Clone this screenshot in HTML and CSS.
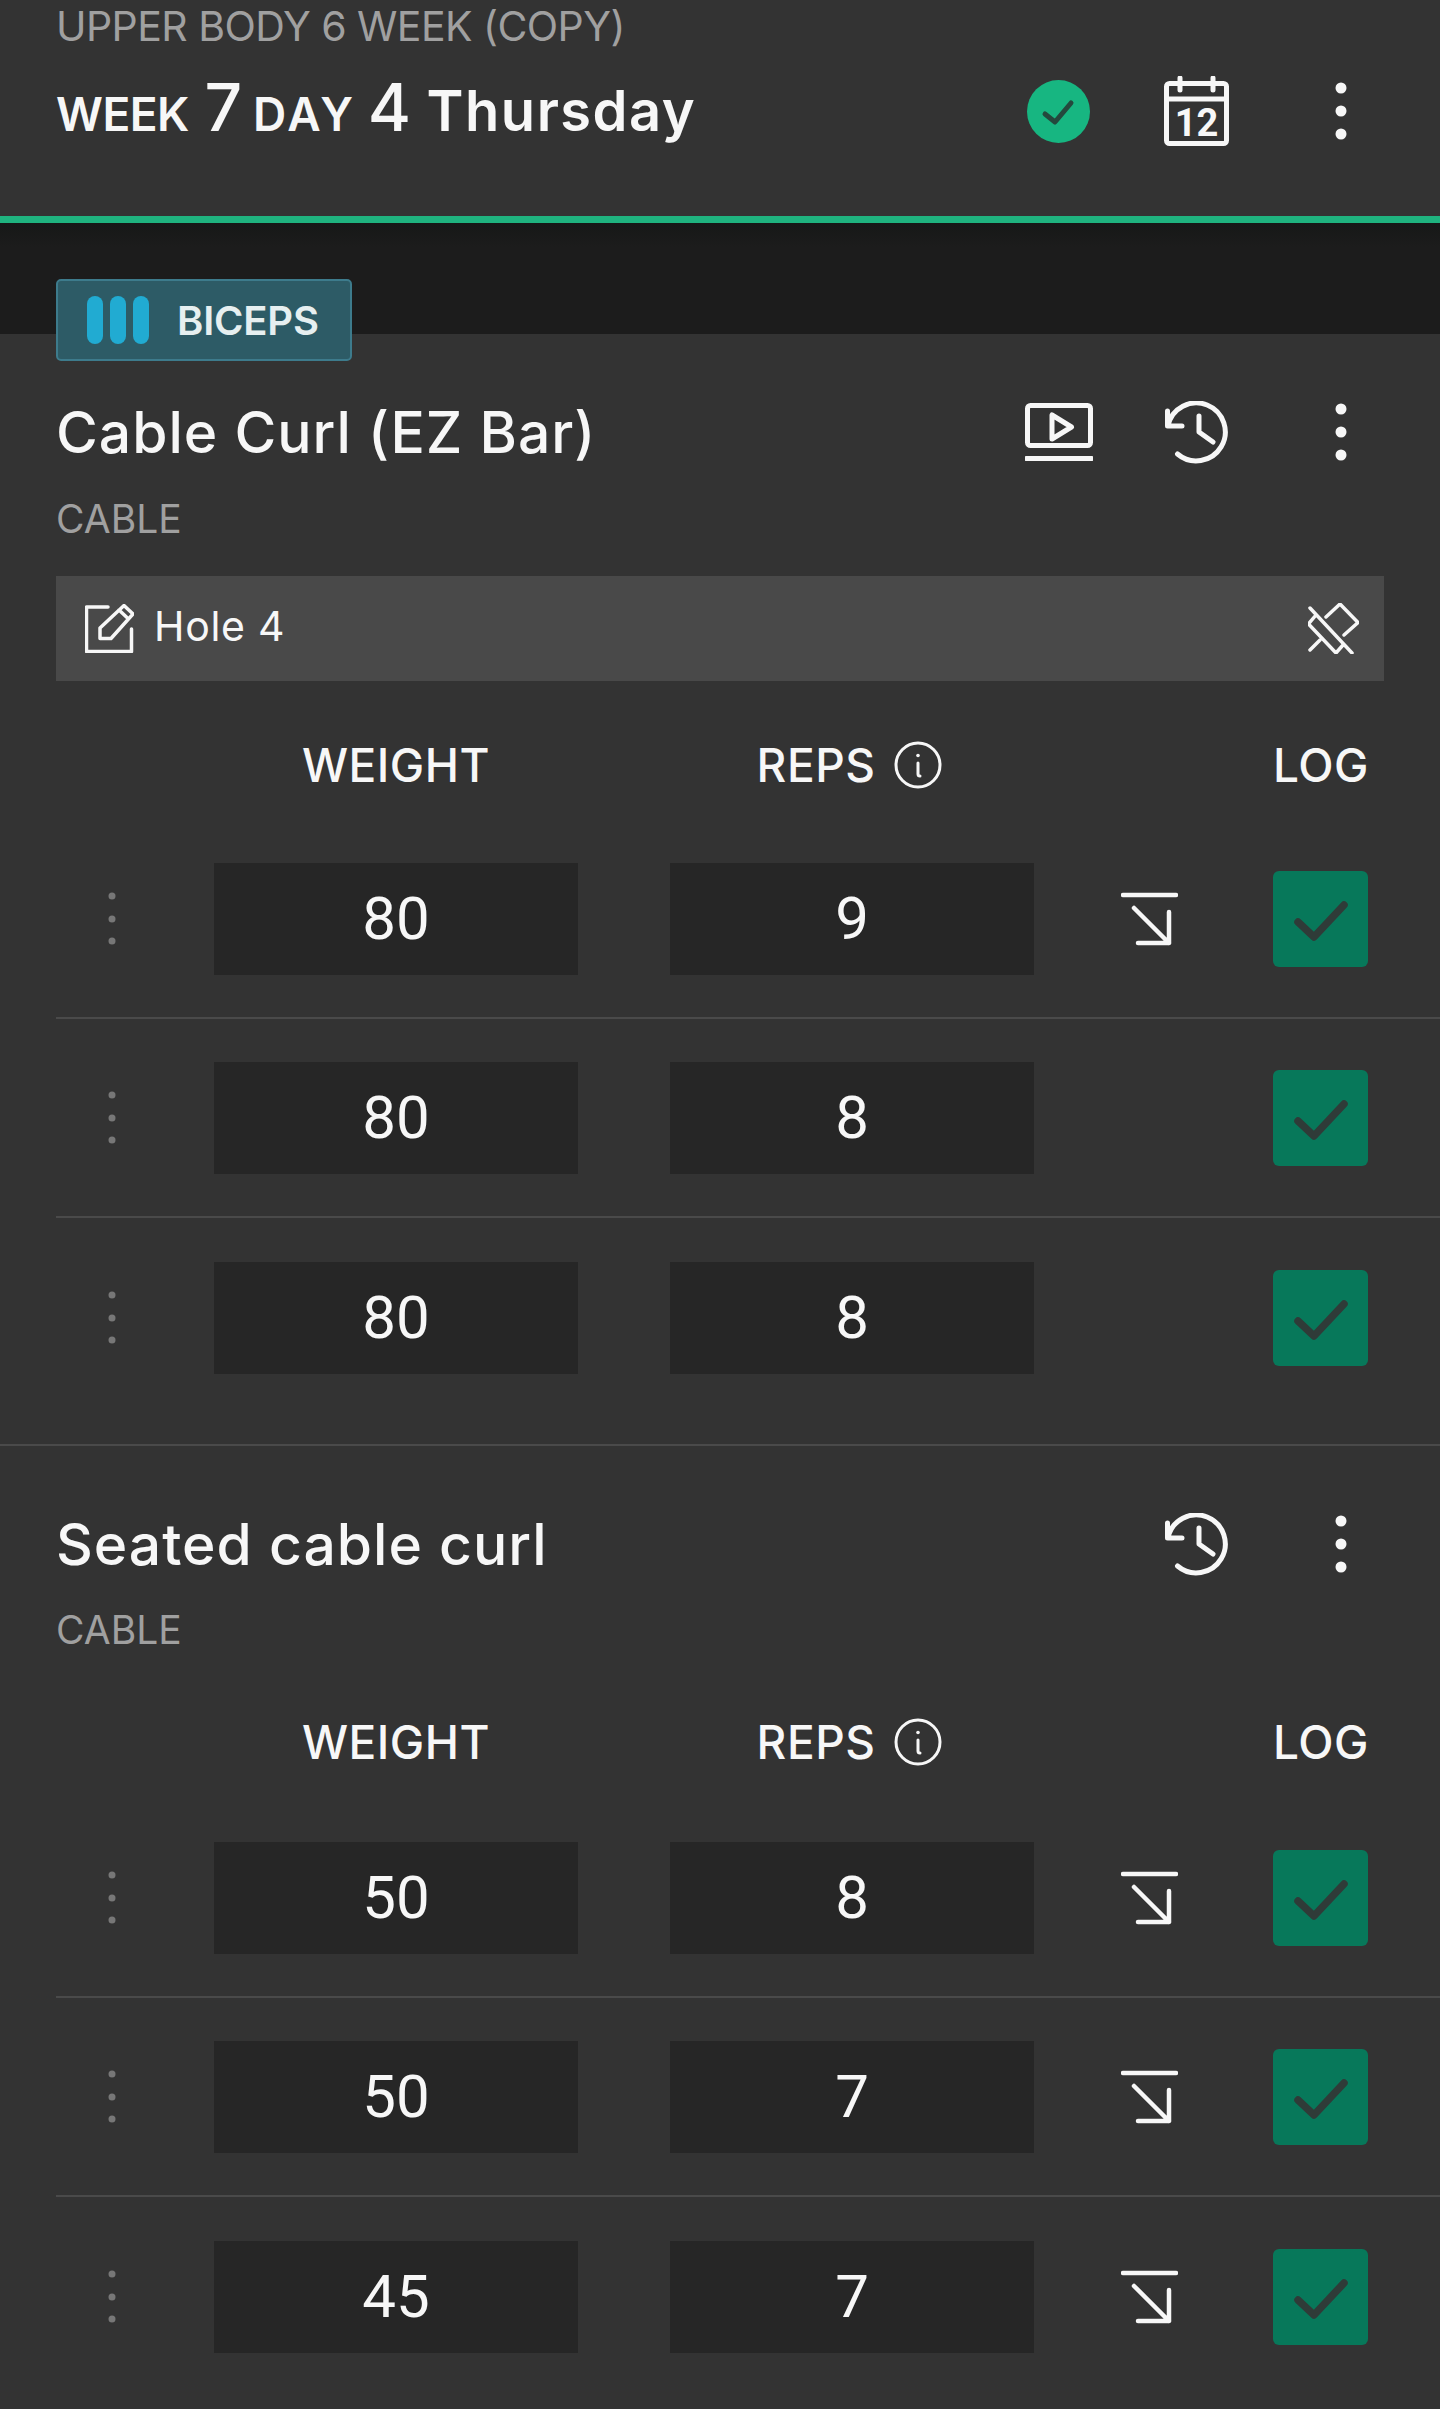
FILE: index.html
```html
<html lang="en">
<head>
  <meta charset="UTF-8" />
  <title>Workout Log</title>
  <link rel="stylesheet" href="styles.css">
</head>
<body>
  <svg class="sprite">
    <symbol id="i-dots" viewBox="0 0 22 68"><circle cx="11" cy="11" r="5.5"/><circle cx="11" cy="34" r="5.5"/><circle cx="11" cy="57" r="5.5"/></symbol>
    <symbol id="i-history" viewBox="0 0 65 63"><path d="M2.500 10V25H17M3 24.500A29 29 0 1 1 12.500 53M34 15V31L48 41"/></symbol>
    <symbol id="i-video" viewBox="0 0 68 58"><rect x="2.500" y="2.500" width="63" height="40" rx="3"/><path d="M1.500 55.500H66.500M27 12V36L46.500 24Z"/></symbol>
    <symbol id="i-info" viewBox="0 0 48 48"><circle cx="24" cy="24" r="22"/><path d="M24 22V33Q24 35 26 35"/><circle class="fill" cx="24" cy="14.500" r="1.800"/></symbol>
    <symbol id="i-grip" viewBox="0 0 8 54"><circle cx="4" cy="4" r="3.500"/><circle cx="4" cy="27" r="3.500"/><circle cx="4" cy="49" r="3.500"/></symbol>
    <symbol id="i-copy" viewBox="0 0 57 54"><path d="M2 3H55M13 16L48 51M48 20V51H17"/></symbol>
    <symbol id="i-check" viewBox="0 0 95 96"><path d="M25 51L41 66L71 34"/></symbol>
  </svg>

  <header class="top">
    <div class="plan">UPPER BODY 6 WEEK (COPY)</div>
    <div class="top-row">
      <h1 class="day">
        <span class="small">WEEK</span> <span class="big">7</span> <span class="small wide">DAY</span> <span class="big next">4</span> Thursday
      </h1>
      <div class="top-icons">
        <svg class="done" viewBox="0 0 63 63"><circle cx="31.500" cy="31.500" r="31.500"/><path d="M18 34L28 42L44 23"/></svg>
        <svg class="calendar" viewBox="0 0 65 70">
          <rect x="2.500" y="7.500" width="60" height="60" rx="3"/>
          <path d="M2.500 23H62.500M16 2V14M49 2V14"/>
          <text x="32.500" y="60" text-anchor="middle">12</text>
        </svg>
        <svg class="dots"><use href="#i-dots"/></svg>
      </div>
    </div>
  </header>

  <div class="band"></div>

  <main class="log">
    <div class="badge">
      <span class="bars"><i></i><i></i><i></i></span>
      <span>BICEPS</span>
    </div>

    <section class="exercise first">
      <div class="ex-head">
        <h2>Cable Curl (EZ Bar)</h2>
        <svg class="ic-video"><use href="#i-video"/></svg>
        <svg class="ic-history"><use href="#i-history"/></svg>
        <svg class="dots"><use href="#i-dots"/></svg>
      </div>
      <div class="kind">CABLE</div>
      <div class="note">
        <svg class="ic-pencil" viewBox="0 0 49 49"><path d="M23 3H1.500V47.500H46.500V25M39 1.500L48 10L26 34.500H15V24ZM34 6L43 14.500"/></svg>
        <span class="note-text">Hole 4</span>
        <svg class="ic-pin" viewBox="0 0 51 51"><path d="M2 5L44 50M18 14L32 1L50 19.500L36 32M8 12L0.500 21L28 50L35 42M12 37L2 47"/></svg>
      </div>
      <div class="cols">
        <span class="col-w">WEIGHT</span>
        <span class="col-r">REPS <svg class="ic-info"><use href="#i-info"/></svg></span>
        <span class="col-l">LOG</span>
      </div>
      <div class="set">
        <svg class="grip"><use href="#i-grip"/></svg>
        <div class="val">80</div>
        <div class="val">9</div>
        <svg class="ic-copy"><use href="#i-copy"/></svg>
        <svg class="tick"><use href="#i-check"/></svg>
      </div>
      <div class="set">
        <svg class="grip"><use href="#i-grip"/></svg>
        <div class="val">80</div>
        <div class="val">8</div>
        <span></span>
        <svg class="tick"><use href="#i-check"/></svg>
      </div>
      <div class="set">
        <svg class="grip"><use href="#i-grip"/></svg>
        <div class="val">80</div>
        <div class="val">8</div>
        <span></span>
        <svg class="tick"><use href="#i-check"/></svg>
      </div>
    </section>

    <section class="exercise second">
      <div class="ex-head">
        <h2>Seated cable curl</h2>
        <svg class="ic-history"><use href="#i-history"/></svg>
        <svg class="dots"><use href="#i-dots"/></svg>
      </div>
      <div class="kind">CABLE</div>
      <div class="cols">
        <span class="col-w">WEIGHT</span>
        <span class="col-r">REPS <svg class="ic-info"><use href="#i-info"/></svg></span>
        <span class="col-l">LOG</span>
      </div>
      <div class="set">
        <svg class="grip"><use href="#i-grip"/></svg>
        <div class="val">50</div>
        <div class="val">8</div>
        <svg class="ic-copy"><use href="#i-copy"/></svg>
        <svg class="tick"><use href="#i-check"/></svg>
      </div>
      <div class="set">
        <svg class="grip"><use href="#i-grip"/></svg>
        <div class="val">50</div>
        <div class="val">7</div>
        <svg class="ic-copy"><use href="#i-copy"/></svg>
        <svg class="tick"><use href="#i-check"/></svg>
      </div>
      <div class="set">
        <svg class="grip"><use href="#i-grip"/></svg>
        <div class="val">45</div>
        <div class="val">7</div>
        <svg class="ic-copy"><use href="#i-copy"/></svg>
        <svg class="tick"><use href="#i-check"/></svg>
      </div>
    </section>
  </main>
</body>
</html>
```

FILE: styles.css
```css
* {
  margin: 0;
  padding: 0;
  box-sizing: border-box;
}

html, body {
  height: 2409px;
  overflow: hidden;
}

body {
  background: #333;
  color: #f7f7f7;
  font-family: Inter, "Liberation Sans", sans-serif;
}

svg {
  display: block;
  flex: none;
  fill: none;
  stroke: #f7f7f7;
  stroke-linecap: round;
  stroke-linejoin: round;
}

.sprite {
  display: none;
}

.top {
  height: 223px;
  padding: 0 56px;
  background: #333;
  border-bottom: 7px solid #1fb37f;
}

.plan {
  height: 52px;
  font-size: 41px;
  line-height: 52px;
  color: #a0a0a0;
  letter-spacing: -0.55px;
  white-space: nowrap;
}

.top-row {
  display: flex;
  align-items: center;
  justify-content: space-between;
  height: 60px;
  margin-top: 29px;
}

.day {
  margin-bottom: 8px;
  font-size: 56px;
  font-weight: 600;
  letter-spacing: 1.5px;
  white-space: nowrap;
}

.day .small {
  font-size: 46px;
  letter-spacing: -0.5px;
}

.day .wide {
  margin-left: -5px;
  letter-spacing: 3px;
}

.day .big {
  font-size: 66px;
  font-weight: 500;
  letter-spacing: 0;
}

.day .next {
  margin-left: -4px;
}

.top-icons {
  display: flex;
  align-items: center;
  margin-right: 29px;
}

.done {
  width: 63px;
  height: 63px;
  margin-right: 74px;
}

.done circle {
  fill: #17b681;
  stroke: none;
}

.done path {
  stroke: #24493d;
  stroke-width: 5;
}

.calendar {
  width: 65px;
  height: 70px;
  margin-right: 101px;
  stroke-width: 5;
}

.calendar text {
  fill: #f7f7f7;
  stroke: none;
  font-size: 38px;
  font-weight: 700;
  font-family: Roboto, sans-serif;
}

.dots {
  width: 22px;
  height: 68px;
  margin-right: 3px;
  fill: #f7f7f7;
  stroke: none;
}

.band {
  height: 111px;
  background: linear-gradient(#161817, #1c1c1c 24px);
}

.log {
  position: relative;
}

.badge {
  position: absolute;
  left: 56px;
  top: -55px;
  display: flex;
  align-items: center;
  gap: 28px;
  width: 296px;
  height: 82px;
  padding-left: 29px;
  background: #2d5b66;
  border: 2px solid #3d7b8c;
  border-radius: 5px;
  font-size: 40px;
  font-weight: 600;
  color: #e6eff0;
  letter-spacing: -0.2px;
}

.bars {
  display: flex;
  gap: 7px;
}

.bars i {
  display: block;
  width: 16px;
  height: 48px;
  background: #21abd2;
  border-radius: 8px;
}

.first {
  height: 1112px;
  padding-top: 64px;
  border-bottom: 2px solid #4a4a4a;
}

.second {
  padding-top: 64px;
}

.ex-head {
  display: flex;
  align-items: center;
  height: 68px;
  padding: 0 0 0 56px;
}

.ex-head h2 {
  flex: 1;
  font-size: 57px;
  font-weight: 500;
  letter-spacing: 1px;
}

.ic-video {
  width: 68px;
  height: 58px;
  margin-right: 72px;
  stroke-width: 5;
}

.ic-history {
  width: 65px;
  height: 63px;
  margin-right: 100px;
  stroke-width: 5;
}

.ex-head .dots {
  margin-right: 88px;
}

.kind {
  margin: 30px 0 0 56px;
  font-size: 39px;
  line-height: 46px;
  color: #a0a0a0;
}

.second .kind {
  margin-top: 29px;
}

.note {
  display: flex;
  align-items: center;
  width: 1328px;
  height: 105px;
  margin: 34px 0 0 56px;
  padding: 0 25px 0 29px;
  background: #494949;
}

.ic-pencil {
  width: 49px;
  height: 49px;
  stroke-width: 3.500;
}

.note-text {
  flex: 1;
  margin-left: 20px;
  padding-bottom: 5px;
  font-size: 41px;
  letter-spacing: 0.7px;
}

.ic-pin {
  width: 51px;
  height: 51px;
  stroke-width: 3.500;
}

.cols {
  display: grid;
  grid-template-columns: 214px 364px 92px 364px 239px 95px;
  align-items: center;
  height: 52px;
  margin: 56px 0 31px;
  font-size: 46px;
  font-weight: 500;
  letter-spacing: 0.5px;
}

.second .cols {
  margin: 61px 0 33px;
}

.col-w {
  grid-column: 2;
  text-align: center;
}

.col-r {
  grid-column: 4;
  display: flex;
  align-items: center;
  justify-content: center;
  gap: 19px;
  padding-right: 5px;
}

.col-l {
  grid-column: 6;
  text-align: center;
}

.ic-info {
  width: 48px;
  height: 48px;
  stroke-width: 3;
}

.fill {
  fill: #f7f7f7;
  stroke: none;
}

.set {
  display: grid;
  grid-template-columns: 158px 364px 456px 239px 95px;
  align-items: center;
  height: 199px;
  margin-left: 56px;
  border-bottom: 2px solid #4a4a4a;
}

.set:last-child {
  border-bottom: 0;
}

.grip {
  width: 8px;
  height: 54px;
  margin-left: 52px;
  fill: #777;
  stroke: none;
}

.val {
  display: flex;
  align-items: center;
  justify-content: center;
  height: 112px;
  background: #262626;
  font-family: Roboto, sans-serif;
  font-size: 60px;
}

.val + .val {
  margin-left: 92px;
}

.ic-copy {
  width: 57px;
  height: 54px;
  margin-left: 87px;
  stroke-width: 4.500;
}

.tick {
  width: 95px;
  height: 96px;
  background: #07785a;
  border-radius: 6px;
  stroke: #2f3b38;
  stroke-width: 7.500;
}
```
